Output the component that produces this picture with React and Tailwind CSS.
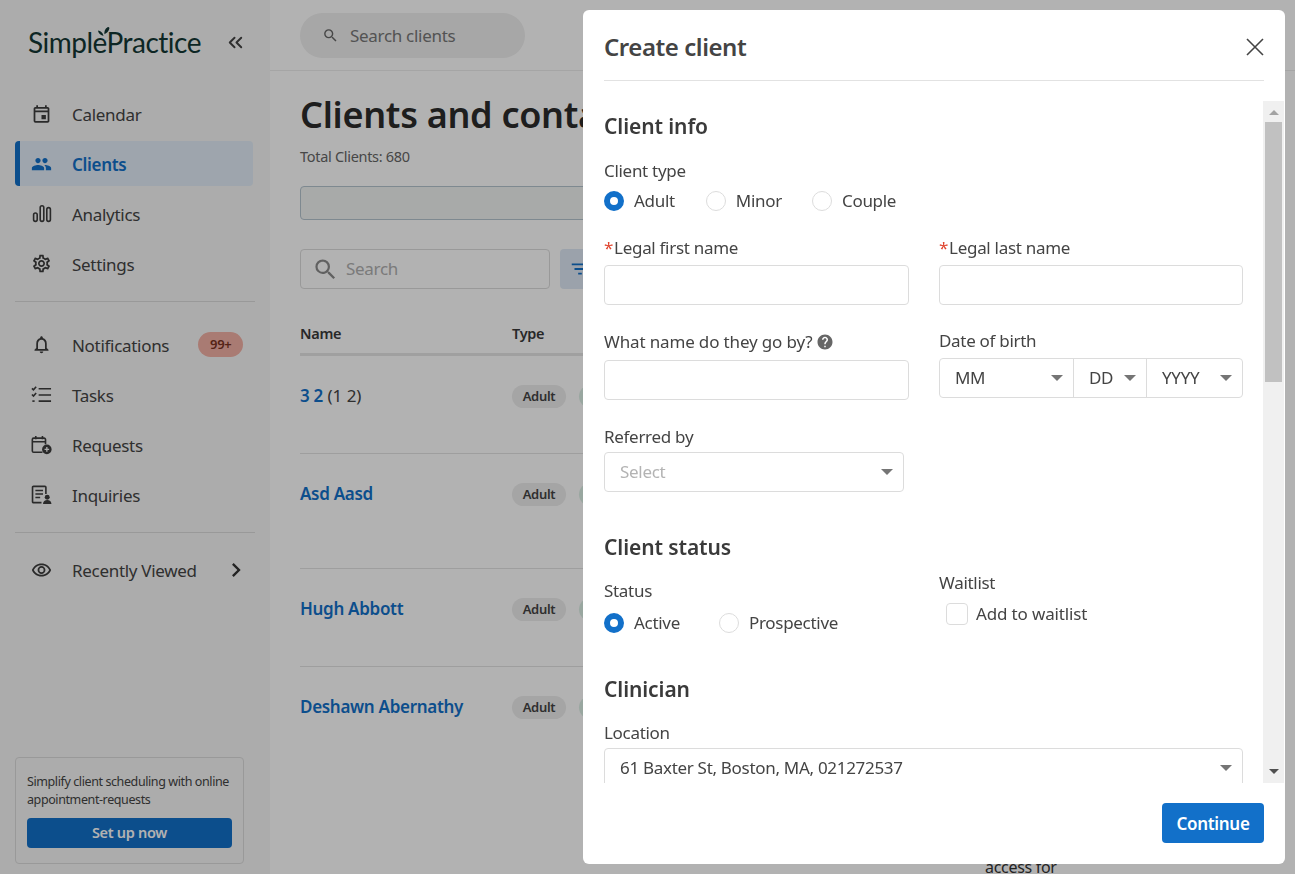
import React from 'react'
import { MdOutlineEvent, MdPeople, MdOutlineSettings, MdOutlineNotifications, MdOutlineRemoveRedEye, MdChevronRight, MdHelp, MdSearch, MdFilterList } from 'react-icons/md'
import { LuChevronsLeft } from 'react-icons/lu'

function BarsIcon() {
  return (
    <svg width="20" height="20" viewBox="0 0 20 20" fill="none" stroke="currentColor" strokeWidth="1.6">
      <rect x="1.6" y="9" width="3.6" height="8.4" rx="1.8" />
      <rect x="8.2" y="1.8" width="3.6" height="15.6" rx="1.8" />
      <rect x="14.8" y="3.6" width="3.6" height="13.8" rx="1.8" />
    </svg>
  )
}

function TasksIcon() {
  return (
    <svg width="22" height="20" viewBox="0 0 22 20" fill="none" stroke="currentColor" strokeWidth="1.7">
      <path d="M1 3l1.6 1.6L5.4 1.4M1 9.5l1.6 1.6 2.8-3.2" />
      <path d="M8 3.4h13M8 10h13M8 16.4h13" />
      <path d="M1.4 16.4h2.4" />
    </svg>
  )
}

function RequestsIcon() {
  return (
    <svg width="22" height="20" viewBox="0 0 22 20" fill="none">
      <path d="M12 17.6H2.8a1.4 1.4 0 0 1-1.4-1.4V4.2a1.4 1.4 0 0 1 1.4-1.4h11a1.4 1.4 0 0 1 1.4 1.4v5" stroke="currentColor" strokeWidth="1.7" />
      <path d="M5 0.5v3.6M12 0.5v3.6M1.4 6.6h13.6" stroke="currentColor" strokeWidth="1.7" />
      <circle cx="16.6" cy="14.6" r="5" fill="currentColor" />
      <path d="M16.6 12.2v4.8M14.2 14.6h4.8" stroke="#f7f7f7" strokeWidth="1.4" />
    </svg>
  )
}

function InquiriesIcon() {
  return (
    <svg width="22" height="20" viewBox="0 0 22 20" fill="none">
      <path d="M11 18H2.6a1 1 0 0 1-1-1V2a1 1 0 0 1 1-1h12a1 1 0 0 1 1 1v7" stroke="currentColor" strokeWidth="1.7" />
      <path d="M4.6 5.4h8M4.6 9h8M4.6 12.6h5" stroke="currentColor" strokeWidth="1.6" />
      <circle cx="17" cy="12.4" r="2.6" fill="currentColor" />
      <path d="M12.6 19.4c0-3 2-4.2 4.4-4.2s4.4 1.2 4.4 4.2z" fill="currentColor" />
    </svg>
  )
}

function NavItem({ icon, label, active, children }) {
  return (
    <div className={`flex h-[45px] items-center rounded-[4px] border-l-[5px] pl-[11px] ${active ? 'border-[#1270c9] bg-[#e2edf8] text-[#1270c9] font-semibold' : 'border-transparent text-[#444]'}`}>
      <span className={`flex w-[21px] justify-center ${active ? 'text-[#1270c9]' : 'text-[#3d3d3d]'}`}>{icon}</span>
      <span className="ml-[20px] pt-[2px] text-[17px]">{label}</span>
      {children}
    </div>
  )
}

function Sidebar() {
  return (
    <aside className="flex h-full w-[270px] shrink-0 flex-col bg-[#f7f7f7] pl-[15px]">
      <div className="relative mt-[20px] flex h-[44px] items-center pl-[13px]">
        <span className="font-['Lato',sans-serif] text-[28px] tracking-[-0.5px] text-[#133734]">SimplePractice</span>
        <svg className="absolute left-[82px] top-[5px]" width="13" height="12" viewBox="0 0 14 13" fill="#133734">
          <path d="M7 12C3 11 1.4 8.6 1 6c3 .4 5.4 2.4 6 6z" />
          <path d="M8 10c-.4-3 .6-6 3.4-7.6 1.4-.6 2.4.6 1.8 2C12.4 7 10.4 9 8 10z" />
        </svg>
        <LuChevronsLeft className="ml-[23px] text-[#444]" size={23} />
      </div>

      <nav className="mt-[27px] flex w-[238px] flex-col gap-[5px]">
        <NavItem icon={<MdOutlineEvent size={26} />} label="Calendar" />
        <NavItem icon={<MdPeople size={24} />} label="Clients" active />
        <NavItem icon={<BarsIcon />} label="Analytics" />
        <NavItem icon={<MdOutlineSettings size={27} />} label="Settings" />
      </nav>
      <div className="mt-[15px] h-px w-[240px] bg-[#dcdcdc]" />

      <nav className="mt-[20px] flex w-[238px] flex-col gap-[5px]">
        <NavItem icon={<MdOutlineNotifications size={27} />} label="Notifications">
          <span className="ml-[29px] flex h-[25px] w-[45px] items-center justify-center rounded-full bg-[#f3b1a5] text-[13px] font-semibold text-[#7a3322]">99+</span>
        </NavItem>
        <NavItem icon={<TasksIcon />} label="Tasks" />
        <NavItem icon={<RequestsIcon />} label="Requests" />
        <NavItem icon={<InquiriesIcon />} label="Inquiries" />
      </nav>
      <div className="mt-[15px] h-px w-[240px] bg-[#dcdcdc]" />

      <div className="mt-[14px] w-[238px]">
        <NavItem icon={<MdOutlineRemoveRedEye size={26} />} label="Recently Viewed">
          <MdChevronRight className="ml-[25px] text-[#333]" size={28} />
        </NavItem>
      </div>

      <div className="mb-[10px] mt-auto flex h-[107px] w-[229px] flex-col rounded-[4px] border border-[#dcdcdc] px-[11px] pt-[15px]">
        <p className="text-[12.5px] leading-[18px] tracking-[-0.4px] text-[#444]">Simplify client scheduling with online appointment-requests</p>
        <button className="mt-[9px] h-[30px] rounded-[4px] bg-[#1270c9] text-[14.5px] font-semibold text-white">Set up now</button>
      </div>
    </aside>
  )
}

function ClientRow({ name, extra, height, last }) {
  return (
    <div className={`flex shrink-0 pt-[28px] ${last ? '' : 'border-b border-[#e3e3e3]'} ${height}`}>
      <div className="w-[212px] shrink-0 text-[17px] leading-[24px] text-[#444]">
        <span className="font-semibold text-[#1270c9]">{name}</span>
        {extra && <span className="tracking-normal"> {extra}</span>}
      </div>
      <span className="mt-px flex h-[23px] w-[54px] shrink-0 items-center justify-center rounded-full bg-[#ececec] text-[13px] font-semibold text-[#444]">Adult</span>
      <span className="ml-[13px] mt-px h-[23px] w-[60px] shrink-0 rounded-full bg-[#dcefe6]" />
    </div>
  )
}

function MainPage() {
  return (
    <main className="flex h-full min-w-0 flex-1 flex-col bg-white">
      <header className="flex h-[71px] shrink-0 items-start border-b border-[#ececec] pl-[30px] pt-[13px]">
        <div className="flex h-[45px] w-[225px] items-center rounded-full bg-[#efefef] pl-[22px] text-[#666]">
          <MdSearch size={17} />
          <span className="ml-[11px] text-[17px] text-[#777]">Search clients</span>
        </div>
      </header>
      <div className="flex min-h-0 flex-1 flex-col overflow-hidden pl-[30px] pr-[30px]">
        <h1 className="mt-[19px] whitespace-nowrap text-[36px] font-semibold leading-[50px] text-[#2b2b2b]">Clients and contacts</h1>
        <p className="mt-[6px] text-[14.5px] leading-[20px] text-[#666]">Total Clients: 680</p>
        <div className="mt-[20px] h-[34px] shrink-0 rounded-[4px] border border-[#b5c4cf] bg-[#f1f4f2]" />
        <div className="mt-[29px] flex shrink-0 gap-[10px]">
          <div className="flex h-[40px] w-[250px] items-center rounded-[4px] border border-[#dcdcdc] pl-[11px] text-[#8c8c8c]">
            <MdSearch size={27} />
            <span className="ml-[7px] text-[17px] text-[#b0b0b0]">Search</span>
          </div>
          <div className="flex h-[40px] w-[60px] items-center rounded-[4px] bg-[#dfe9f5] pl-[9px] text-[#1270c9]">
            <MdFilterList size={22} />
          </div>
        </div>
        <div className="mt-[34px] flex h-[33px] shrink-0 border-b-[3px] border-[#e6e6e6] text-[14.5px] font-semibold text-[#3a3a3a]">
          <span className="w-[212px]">Name</span>
          <span>Type</span>
        </div>
        <ClientRow name="3 2" extra="(1 2)" height="h-[98px]" />
        <ClientRow name="Asd Aasd" height="h-[115px]" />
        <ClientRow name="Hugh Abbott" height="h-[98px]" />
        <ClientRow name="Deshawn Abernathy" height="h-[98px]" last />
        <div className="shrink-0 pl-[685px] pt-[91px] text-[16px] leading-[22px] text-[#333]">access for</div>
      </div>
    </main>
  )
}

function Radio({ checked, label, className }) {
  return (
    <div className={`flex items-center ${className ?? ''}`}>
      {checked
        ? <span className="h-[20px] w-[20px] rounded-full border-[6px] border-[#1270c9] bg-white" />
        : <span className="h-[20px] w-[20px] rounded-full border border-[#dcdcdc] bg-white" />}
      <span className="ml-[10px] text-[17px] leading-[24px] text-[#444]">{label}</span>
    </div>
  )
}

function Label({ children, className }) {
  return <div className={`h-[24px] text-[17px] leading-[24px] text-[#444] ${className ?? ''}`}>{children}</div>
}

function Required({ children }) {
  return <Label><span className="mr-px text-[#e0442e]">*</span>{children}</Label>
}

const Caret = () => <span className="h-0 w-0 border-x-[6px] border-t-[6px] border-x-transparent border-t-[#757575]" />

function TextInput() {
  return <div className="h-[40px] rounded-[4px] border border-[#dcdcdc] bg-white" />
}

function Select({ text, placeholder, className }) {
  return (
    <div className={`flex h-[40px] items-center justify-between rounded-[4px] border border-[#dcdcdc] bg-white pl-[15px] pr-[10px] ${className ?? ''}`}>
      <span className={`text-[17px] ${placeholder ? 'text-[#b3b3b3]' : 'text-[#444]'}`}>{text}</span>
      <Caret />
    </div>
  )
}

function Scrollbar() {
  return (
    <div className="flex w-[21px] shrink-0 flex-col items-center bg-[#f0f0f0]">
      <span className="mt-[9px] h-0 w-0 border-x-[5px] border-b-[5px] border-x-transparent border-b-[#a3a3a3]" />
      <div className="mt-[7px] h-[260px] w-[17px] bg-[#c1c1c1]" />
      <span className="mb-[9px] mt-auto h-0 w-0 border-x-[5px] border-t-[5px] border-x-transparent border-t-[#505050]" />
    </div>
  )
}

function CreateClientModal() {
  return (
    <div className="fixed left-[583px] top-[10px] flex h-[854px] w-[702px] flex-col rounded-[6px] bg-white">
      <div className="ml-[21px] mr-[21px] flex h-[71px] shrink-0 items-center justify-between border-b border-[#e2e2e2] pt-[3px]">
        <h2 className="text-[24px] font-semibold tracking-[-0.45px] text-[#444]">Create client</h2>
        <svg width="18" height="18" viewBox="0 0 18 18" fill="none" stroke="#444" strokeWidth="1.6">
          <path d="M1 1l16 16M17 1L1 17" />
        </svg>
      </div>

      <div className="mt-[20px] flex h-[682px] shrink-0 overflow-hidden">
        <div className="w-[680px] shrink-0 pl-[21px] pr-[20px]">
          <h3 className="mt-[10px] text-[21px] font-semibold leading-[30px] tracking-[-0.1px] text-[#3a3a3a]">Client info</h3>
          <Label className="mt-[18px]">Client type</Label>
          <div className="mt-[6px] flex">
            <Radio checked label="Adult" />
            <Radio label="Minor" className="ml-[31px]" />
            <Radio label="Couple" className="ml-[30px]" />
          </div>

          <div className="mt-[23px] flex gap-[30px]">
            <div className="w-[305px]">
              <Required>Legal first name</Required>
              <div className="mt-[5px]"><TextInput /></div>
            </div>
            <div className="w-[304px]">
              <Required>Legal last name</Required>
              <div className="mt-[5px]"><TextInput /></div>
            </div>
          </div>

          <div className="mt-[25px] flex gap-[30px]">
            <div className="w-[305px]">
              <Label className="flex items-center tracking-[-0.15px]">What name do they go by?<MdHelp className="ml-[3px] text-[#666]" size={18} /></Label>
              <div className="mt-[6px]"><TextInput /></div>
            </div>
            <div className="-mt-px w-[304px]">
              <Label>Date of birth</Label>
              <div className="mt-[5px] flex h-[40px] rounded-[4px] border border-[#dcdcdc]">
                <div className="flex w-[134px] items-center justify-between border-r border-[#dcdcdc] pl-[15px] pr-[10px] text-[17px] text-[#444]">MM<Caret /></div>
                <div className="flex w-[73px] items-center justify-between border-r border-[#dcdcdc] pl-[15px] pr-[10px] text-[17px] text-[#444]">DD<Caret /></div>
                <div className="flex flex-1 items-center justify-between pl-[15px] pr-[10px] text-[17px] text-[#444]">YYYY<Caret /></div>
              </div>
            </div>
          </div>

          <Label className="mt-[25px]">Referred by</Label>
          <Select text="Select" placeholder className="mt-[3px] w-[300px]" />

          <h3 className="mt-[40px] text-[21px] font-semibold leading-[30px] tracking-[-0.1px] text-[#3a3a3a]">Client status</h3>
          <div className="flex gap-[30px]">
            <div className="mt-[17px] w-[305px]">
              <Label>Status</Label>
              <div className="mt-[8px] flex">
                <Radio checked label="Active" />
                <Radio label="Prospective" className="ml-[39px]" />
              </div>
            </div>
            <div className="mt-[9px]">
              <Label>Waitlist</Label>
              <div className="ml-[7px] mt-[7px] flex items-center">
                <span className="h-[22px] w-[22px] rounded-[4px] border border-[#dcdcdc]" />
                <span className="ml-[8px] text-[17px] leading-[24px] tracking-[-0.15px] text-[#444]">Add to waitlist</span>
              </div>
            </div>
          </div>

          <h3 className="mt-[39px] text-[21px] font-semibold leading-[30px] tracking-[-0.1px] text-[#3a3a3a]">Clinician</h3>
          <Label className="mt-[17px]">Location</Label>
          <Select text="61 Baxter St, Boston, MA, 021272537" className="mt-[3px]" />
        </div>
        <Scrollbar />
      </div>

      <div className="flex justify-end pr-[21px] pt-[20px]">
        <button className="h-[40px] w-[102px] rounded-[4px] bg-[#1270c9] pt-[2px] text-[17px] font-semibold text-white">Continue</button>
      </div>
    </div>
  )
}

export default function App() {
  return (
    <div className="flex h-screen w-full overflow-hidden font-['Noto_Sans',sans-serif] tracking-[-0.3px]">
      <Sidebar />
      <MainPage />
      <div className="fixed inset-0 bg-black/30" />
      <CreateClientModal />
    </div>
  )
}
